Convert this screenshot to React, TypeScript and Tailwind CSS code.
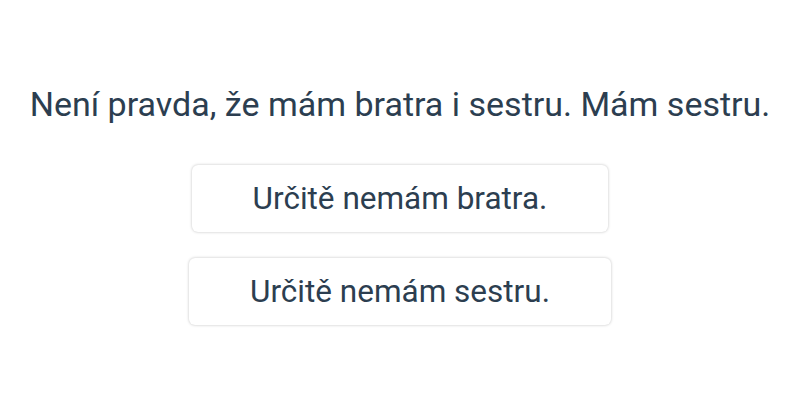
export default function App() {
  const options = ["Určitě nemám bratra.", "Určitě nemám sestru."];

  return (
    <div className="w-[800px] h-[400px] bg-white flex flex-col items-center pt-[84px] font-['Roboto',sans-serif] text-[#2c3e50]">
      <p className="text-[34px] leading-[40px] whitespace-nowrap">Není pravda, že mám bratra i sestru. Mám sestru.</p>

      {/* Answers */}
      <div className="flex flex-col items-center gap-[26px] mt-[41px]">
        {options.map((o) => (
          <button
            key={o}
            className="h-[67px] px-[61px] rounded-[6px] bg-white text-[31.5px] text-[#2c3e50] shadow-[0_0_3px_rgba(0,0,0,0.25)]"
          >
            {o}
          </button>
        ))}
      </div>
    </div>
  );
}
